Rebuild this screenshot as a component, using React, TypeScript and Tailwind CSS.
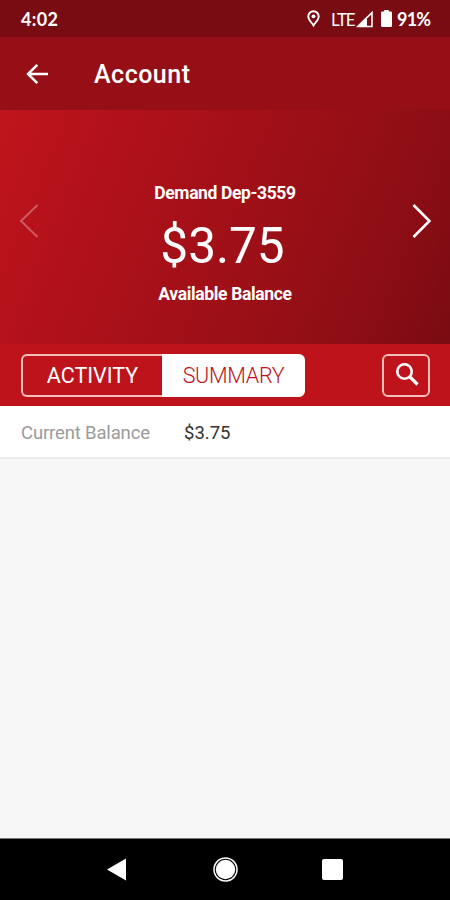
import { useState } from 'react'

const TABS = [
  { id: 'activity', label: 'ACTIVITY' },
  { id: 'summary', label: 'SUMMARY' },
]

const ACCOUNT = {
  name: 'Demand Dep-3559',
  balance: '$3.75',
}

function StatusBar() {
  return (
    <div className="flex h-[37px] items-center bg-[#790c12] pt-[2px] pr-[21px] pl-[21px] font-['Lato',sans-serif] text-[18px] font-bold">
      <span className="tracking-[0.3px]">4:02</span>
      <div className="ml-auto flex items-center">
        <svg
          className="mb-[2px]"
          width="13"
          height="17"
          viewBox="0 0 13 17"
          fill="none"
        >
          <path
            d="M6.5 1.2a5.2 5.2 0 0 0-5.2 5.2c0 3.4 3.5 6.2 5.2 9 1.7-2.8 5.2-5.6 5.2-9a5.2 5.2 0 0 0-5.2-5.2Z"
            stroke="currentColor"
            strokeWidth="1.9"
          />
          <circle cx="6.5" cy="6.3" r="1.9" fill="currentColor" />
        </svg>
        <span className="ml-[11px] w-[23px] text-[17px] font-normal tracking-[-1.2px]">
          LTE
        </span>
        <svg
          className="mb-px ml-[2px]"
          width="17"
          height="17"
          viewBox="0 0 17 17"
        >
          <path
            d="M1.8 15.5 16 1.6v13.9Z"
            fill="none"
            stroke="currentColor"
            strokeWidth="1.6"
          />
          <path d="M.5 16 11 5.5V16Z" fill="currentColor" />
        </svg>
        <svg
          className="mb-[2px] ml-2"
          width="11"
          height="17"
          viewBox="0 0 11 17"
        >
          <path
            d="M3.2 0h4.6v1.6H10a1 1 0 0 1 1 1v13.2A1.2 1.2 0 0 1 9.8 17H1.2A1.2 1.2 0 0 1 0 15.8V2.6a1 1 0 0 1 1-1h2.2Z"
            fill="currentColor"
          />
        </svg>
        <span className="ml-[5px] w-[32px] tracking-[-0.8px]">91%</span>
      </div>
    </div>
  )
}

function Header() {
  return (
    <header className="flex h-[73px] items-center bg-[#960f16] pl-[26px]">
      <button aria-label="Back">
        <svg width="23" height="22" viewBox="0 0 23 22" fill="none">
          <path
            d="M22 11H2.5M11.3 1.8 2 11l9.3 9.2"
            stroke="currentColor"
            strokeWidth="2.5"
          />
        </svg>
      </button>
      <h1 className="mt-[3px] ml-[45px] text-[25px] font-medium tracking-[0.5px]">
        Account
      </h1>
    </header>
  )
}

function BalanceCard() {
  return (
    <section className="flex h-[234px] items-center justify-between bg-[linear-gradient(112deg,#bf141c_0%,#b5121b_18%,#a61018_42%,#960f16_68%,#8b0d14_84%,#790c12_100%)] px-[19px]">
      <button aria-label="Previous account" className="mb-[13px] opacity-30">
        <svg width="20" height="34" viewBox="0 0 20 34" fill="none">
          <path
            d="M18.5 1 2 17l16.5 16"
            stroke="currentColor"
            strokeWidth="2"
          />
        </svg>
      </button>
      <div className="flex flex-col items-center pt-[32px]">
        <span className="text-[17.5px] leading-[22px] font-bold tracking-[-0.38px]">
          {ACCOUNT.name}
        </span>
        <span className="mt-[14px] mr-[5px] text-[49.5px] leading-[56px]">
          {ACCOUNT.balance}
        </span>
        <span className="mt-[9px] text-[17.5px] leading-[22px] font-bold tracking-[-0.35px]">
          Available Balance
        </span>
      </div>
      <button aria-label="Next account" className="mb-[13px]">
        <svg width="20" height="34" viewBox="0 0 20 34" fill="none">
          <path
            d="m2.5 1 16 16-16 16"
            stroke="currentColor"
            strokeWidth="2.6"
          />
        </svg>
      </button>
    </section>
  )
}

export default function App() {
  const [selectedTab, setSelectedTab] = useState<string>('summary')

  return (
    <div className="flex h-[900px] w-[450px] flex-col overflow-hidden bg-[#f7f7f7] font-['Roboto',sans-serif] text-white">
      <StatusBar />
      <Header />
      <BalanceCard />

      <div className="flex h-[62px] items-center justify-between bg-[#be131b] pr-5 pl-[21px]">
        <div className="flex h-[43px] w-[284px]">
          {TABS.map((tab) => (
            <button
              key={tab.id}
              onClick={() => setSelectedTab(tab.id)}
              className={
                selectedTab === tab.id
                  ? 'flex-1 border-2 border-white bg-white pt-[2px] text-[21.5px] font-light tracking-[-0.3px] text-[#be131b] first:rounded-l-[6px] last:rounded-r-[6px]'
                  : 'flex-1 border-2 border-[#f4bdb9] pt-[2px] text-[21.5px] first:rounded-l-[6px] first:border-r-0 last:rounded-r-[6px] last:border-l-0'
              }
            >
              {tab.label}
            </button>
          ))}
        </div>
        <button
          aria-label="Search"
          className="flex h-[43px] w-[48px] items-center justify-center rounded-[6px] border-2 border-[#f4bdb9]"
        >
          <svg
            className="mb-[2px] ml-[2px]"
            width="24"
            height="24"
            viewBox="0 0 24 24"
            fill="none"
          >
            <circle
              cx="9.5"
              cy="9.5"
              r="7.2"
              stroke="currentColor"
              strokeWidth="2.6"
            />
            <path
              d="m14.500 14.500 8 8"
              stroke="currentColor"
              strokeWidth="3.2"
            />
          </svg>
        </button>
      </div>

      <div className="flex h-[53px] items-center border-b-2 border-[#ebebeb] bg-white pt-[4px] pl-[21px] text-[18.5px]">
        <span className="w-[163px] tracking-[-0.15px] text-[#9b9b9b]">
          Current Balance
        </span>
        <span className="text-[#333]">{ACCOUNT.balance}</span>
      </div>

      <nav className="mt-auto flex h-[62px] items-center justify-between border-t border-[#777] bg-black px-[107px]">
        <svg width="20" height="23" viewBox="0 0 20 23" fill="currentColor">
          <path d="M19 .5v22L0 11.5Z" />
        </svg>
        <svg
          className="ml-px"
          width="25"
          height="25"
          viewBox="0 0 25 25"
          fill="none"
        >
          <circle
            cx="12.5"
            cy="12.5"
            r="11.5"
            stroke="currentColor"
            strokeWidth="1.5"
          />
          <circle cx="12.5" cy="12.5" r="9.7" fill="currentColor" />
        </svg>
        <svg width="21" height="21" viewBox="0 0 21 21" fill="currentColor">
          <rect width="21" height="21" rx="2" />
        </svg>
      </nav>
    </div>
  )
}
